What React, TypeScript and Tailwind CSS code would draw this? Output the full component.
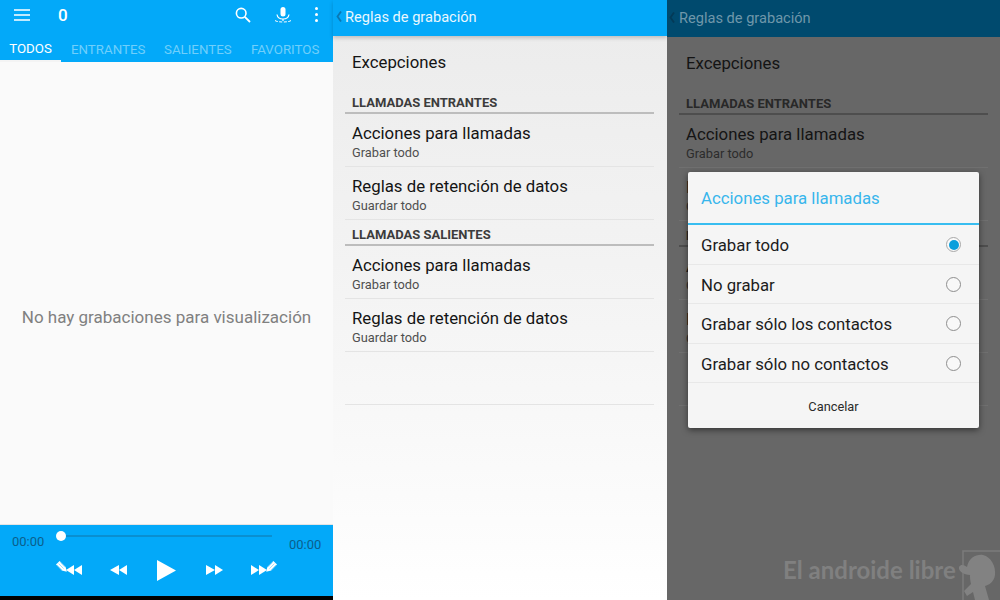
const font = { fontFamily: "Roboto, 'Liberation Sans', sans-serif" };

function Pen({ flip }: { flip?: boolean }) {
  return (
    <svg width="11" height="11" viewBox="0 0 11 11" className={flip ? "shrink-0" : "shrink-0 -scale-x-100"}>
      <path d="M3.6 0 L9.6 6 L10.8 10.8 L5.8 9.6 L0 3.6 Z" fill="#fff" />
      <path d="M2.6 2.6 L7.6 7.6 M1 4 L6 9 M4.4 1.4 L9 6.2" stroke="#03a9f9" strokeWidth="0.5" opacity="0.7" />
    </svg>
  );
}

function Tri({ dir, w, h }: { dir: "l" | "r"; w: number; h: number }) {
  return (
    <svg width={w} height={h} viewBox="0 0 10 10" preserveAspectRatio="none" className="shrink-0">
      <path d={dir === "l" ? "M10 0 V10 L0 5 Z" : "M0 0 V10 L10 5 Z"} fill="#fff" />
    </svg>
  );
}

function LeftPanel() {
  return (
    <div className="w-[333px] h-full flex flex-col bg-[#fafafa]">
      <div className="bg-[#03a9f9] h-[62px] flex flex-col shrink-0">
        <div className="h-[31px] flex items-center text-white">
          <svg width="16" height="12" viewBox="0 0 16 12" className="ml-[14px] -mt-[2px]">
            <path d="M0 1h16M0 6h16M0 11h16" stroke="#fff" strokeWidth="1.4" />
          </svg>
          <span className="ml-[28px] w-[9px] text-[17px] font-medium leading-none">0</span>
          <svg width="16" height="16" viewBox="0 0 16 16" className="ml-[168px] -mt-[2px]">
            <circle cx="6.2" cy="6.2" r="4.8" fill="none" stroke="#fff" strokeWidth="1.6" />
            <path d="M9.8 9.8 L15 15" stroke="#fff" strokeWidth="1.8" />
          </svg>
          <svg width="18" height="16" viewBox="0 0 18 16" className="ml-[23px] -mt-[1px]">
            <rect x="6.5" y="0" width="5" height="9.5" rx="2.5" fill="#fff" />
            <path d="M3 7.5 C3.5 11 6 12 9 12 C12 12 14.5 11 15 7.5" fill="none" stroke="#fff" strokeWidth="1.2" />
            <path d="M9 12 V14" stroke="#fff" strokeWidth="1.2" />
            <path d="M1 13.5 C3 15.5 15 15.5 17 13.5" fill="none" stroke="#fff" strokeWidth="1" strokeDasharray="3 1.5" />
          </svg>
          <div className="ml-[23px] -mt-[2px] flex flex-col gap-[3px]">
            <span className="w-[3px] h-[3px] bg-white rounded-full" />
            <span className="w-[3px] h-[3px] bg-white rounded-full" />
            <span className="w-[3px] h-[3px] bg-white rounded-full" />
          </div>
        </div>
        <div className="h-[31px] flex text-[13.3px] text-[#70cffb]">
          <div className="w-[61px] flex items-center justify-center text-white border-b-2 border-[#f4f4f4] pt-[7px]">TODOS</div>
          <div className="w-[94px] pl-[10px] flex items-center pt-[7px]">ENTRANTES</div>
          <div className="w-[87px] pl-[9px] flex items-center pt-[7px]">SALIENTES</div>
          <div className="pl-[9px] flex items-center pt-[7px]">FAVORITOS</div>
        </div>
      </div>
      <div className="flex-1 flex items-center justify-center text-[17px] text-[#808080] pt-[49px]">
        No hay grabaciones para visualización
      </div>
      <div className="h-[72px] bg-[#03a9f9] shrink-0 flex flex-col border-t border-[#e4e4e4]">
        <div className="h-[28px] flex pl-[12px] text-[13px] text-[#0b5f8c]">
          <span className="w-[32px] mt-[8px] leading-[17px]">00:00</span>
          <div className="relative w-[211px] ml-[17px] h-[2px] mt-[10px] bg-[#0a8fd0]">
            <span className="absolute -left-[5px] -top-[4px] w-[10px] h-[10px] rounded-full bg-white" />
          </div>
          <span className="ml-[17px] mt-[11px] leading-[17px]">00:00</span>
        </div>
        <div className="flex items-center h-[34px] pl-[56px]">
          <div className="flex items-center w-[54px]">
            <div className="-mt-[8px] -mr-[1px]"><Pen flip /></div>
            <Tri dir="l" w={8} h={10} />
            <Tri dir="l" w={8} h={10} />
          </div>
          <div className="flex items-center w-[47px]">
            <Tri dir="l" w={9} h={10} />
            <Tri dir="l" w={8} h={10} />
          </div>
          <div className="w-[49px]">
            <Tri dir="r" w={19} h={21} />
          </div>
          <div className="flex items-center w-[45px]">
            <Tri dir="r" w={9} h={10} />
            <Tri dir="r" w={8} h={10} />
          </div>
          <div className="flex items-center">
            <Tri dir="r" w={8} h={10} />
            <Tri dir="r" w={8} h={10} />
            <div className="-mt-[8px] -ml-[1px]"><Pen /></div>
          </div>
        </div>
      </div>
      <div className="h-[4px] bg-black shrink-0" />
    </div>
  );
}

function Row({ title, sub, line, subText }: { title: string; sub: string; line: string; subText: string }) {
  return (
    <div className={`h-[53px] border-b ml-[12px] mr-[12px] px-[7px] pt-[9px] ${line}`}>
      <div className="text-[16.8px] leading-[20px] text-[#141414]">{title}</div>
      <div className={`text-[12.8px] leading-[16px] mt-[2px] ${subText}`}>{sub}</div>
    </div>
  );
}

function Heading({ label, line, text }: { label: string; line: string; text: string }) {
  return (
    <div className={`h-[26px] mx-[12px] px-[7px] border-b-2 text-[13px] font-bold leading-[15px] pt-[7px] ${line} ${text}`}>
      {label}
    </div>
  );
}

function Rules({ dark }: { dark?: boolean }) {
  const rowLine = dark ? "border-[#707070]" : "border-[#e4e4e4]";
  const headLine = dark ? "border-[#4e4e4e]" : "border-[#bdbdbd]";
  const headText = dark ? "text-[#282828]" : "text-[#3c3c3c]";
  const subText = dark ? "text-[#2c2c2c]" : "text-[#4f4f4f]";
  return (
    <div>
      <div className="h-[52px] mx-[12px] px-[7px] pt-[16px] text-[16.8px] leading-[20px] text-[#141414]">Excepciones</div>
      <Heading label="LLAMADAS ENTRANTES" line={headLine} text={headText} />
      <Row title="Acciones para llamadas" sub="Grabar todo" line={rowLine} subText={subText} />
      <Row title="Reglas de retención de datos" sub="Guardar todo" line={rowLine} subText={subText} />
      <Heading label="LLAMADAS SALIENTES" line={headLine} text={headText} />
      <Row title="Acciones para llamadas" sub="Grabar todo" line={rowLine} subText={subText} />
      <Row title="Reglas de retención de datos" sub="Guardar todo" line={rowLine} subText={subText} />
      <div className={`h-[53px] border-b mx-[12px] ${rowLine}`} />
    </div>
  );
}

function MiddlePanel() {
  return (
    <div className="w-[334px] h-full flex flex-col pr-[1px] bg-gradient-to-b from-[#ebebeb] via-[#f6f6f6] via-60% to-white">
      <div className="relative h-[36px] shrink-0 -mr-[1px] bg-[#03a9f9] flex items-center pl-[12px] pb-[1px] text-[14.6px] text-[#eaf7fe] shadow-[0_2px_4px_rgba(0,0,0,0.2)]">
        <svg width="6" height="11" viewBox="0 0 6 11" className="absolute left-[3px] top-[11px]">
          <path d="M5 0.5 L1.5 5.5 L5 10.5" fill="none" stroke="#0a78b4" strokeWidth="1.8" />
        </svg>
        Reglas de grabación
      </div>
      <Rules />
    </div>
  );
}

function Radio({ on }: { on?: boolean }) {
  return on ? (
    <span className="mt-[1px] w-[15px] h-[15px] rounded-full border border-[#a8a8a8] bg-[#fafafa] flex items-center justify-center">
      <span className="w-[10px] h-[10px] rounded-full bg-[#0a9fdc]" />
    </span>
  ) : (
    <span className="mt-[1px] w-[15px] h-[15px] rounded-full border border-[#8e8e8e] bg-[#f8f8f8]" />
  );
}

function Option({ label, on }: { label: string; on?: boolean }) {
  return (
    <div className="h-[39.5px] flex items-center justify-between pl-[13px] pr-[18px] border-b border-[#e8e8e8] text-[16.75px] text-[#1c1c1c]">
      <span className="mt-[3px]">{label}</span>
      <Radio on={on} />
    </div>
  );
}

function RightPanel() {
  return (
    <div className="relative w-[333px] h-full flex flex-col bg-[#676767] overflow-hidden">
      <div className="relative h-[37px] shrink-0 bg-[#004a6e] flex items-center pl-[12px] text-[14.6px] text-[#6f97aa]">
        <svg width="6" height="11" viewBox="0 0 6 11" className="absolute left-[2px] top-[12px]">
          <path d="M5 0.5 L1.5 5.5 L5 10.5" fill="none" stroke="#033a57" strokeWidth="1.8" />
        </svg>
        Reglas de grabación
      </div>
      <Rules dark />
      <div className="absolute left-[21px] top-[172px] w-[291px] h-[256px] bg-[#f5f5f5] rounded-[2px] shadow-[0_2px_6px_rgba(0,0,0,0.5)] flex flex-col">
        <div className="h-[53px] shrink-0 border-b-2 border-[#38bdf0] pl-[13px] pt-[2px] flex items-center text-[16.8px] text-[#38b6ec]">
          Acciones para llamadas
        </div>
        <Option label="Grabar todo" on />
        <Option label="No grabar" />
        <Option label="Grabar sólo los contactos" />
        <Option label="Grabar sólo no contactos" />
        <div className="flex-1 flex items-center justify-center pt-[3px] text-[12.8px] text-[#2a2a2a]">Cancelar</div>
      </div>
      <div className="absolute left-[116px] top-[554px] text-[24px] leading-[32px] font-bold text-[#808080] whitespace-nowrap" style={{ fontFamily: "Lato, sans-serif" }}>
        El androide libre
      </div>
      <svg width="42" height="50" viewBox="0 0 42 50" className="absolute left-[291px] top-[550px]">
        <path d="M5 50 V1 H42" fill="none" stroke="#7c7c7c" strokeWidth="1.5" />
        <path d="M9 17 C11 7 19 4 25 5 C33 7 38 16 37 25 C36 32 31 35 27 36 L31 50 H17 L15 42 L9 46 L6 41 L13 34 C12 30 12 27 12 25 C6 25 0 21 1 17 C3 14 6 15 9 17 Z" fill="#828282" />
      </svg>
    </div>
  );
}

export default function App() {
  return (
    <div className="w-[1000px] h-[600px] flex overflow-hidden bg-white" style={font}>
      <LeftPanel />
      <MiddlePanel />
      <RightPanel />
    </div>
  );
}
